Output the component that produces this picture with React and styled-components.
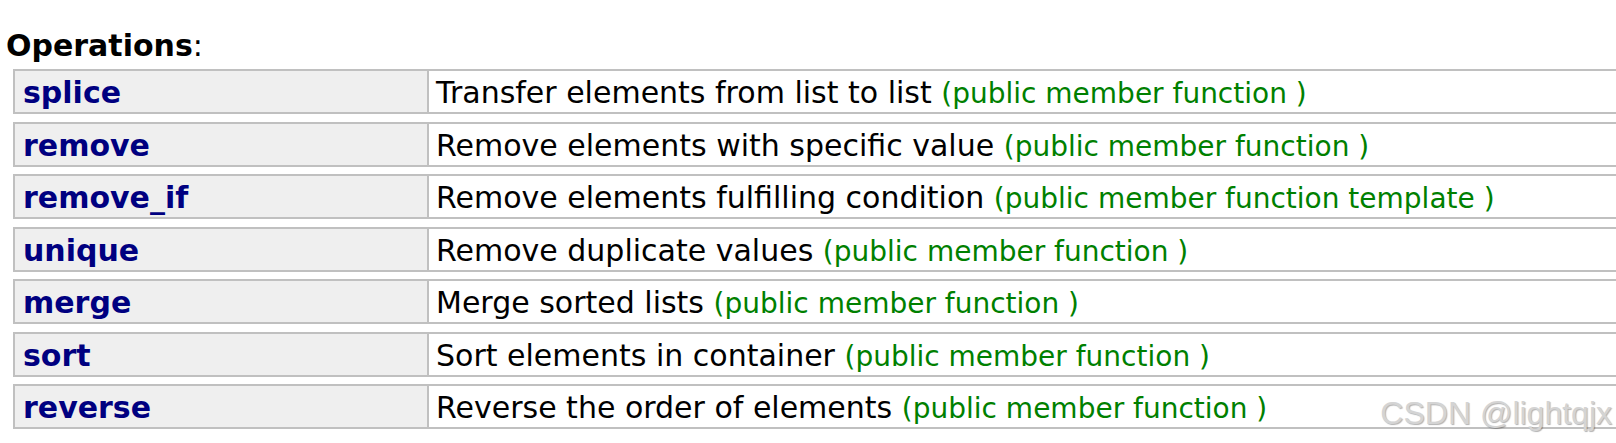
import styled, { createGlobalStyle } from "styled-components";

const GlobalStyle = createGlobalStyle`
html, body {
    margin: 0;
    padding: 0;
    background: #fff;
    overflow: hidden;
}
body {
    font-family: "DejaVu Sans", Verdana, sans-serif;
}
`

const operations = [
    { name: "splice", desc: "Transfer elements from list to list", kind: "public member function" },
    { name: "remove", desc: "Remove elements with specific value", kind: "public member function" },
    { name: "remove_if", desc: "Remove elements fulfilling condition", kind: "public member function template" },
    { name: "unique", desc: "Remove duplicate values", kind: "public member function" },
    { name: "merge", desc: "Merge sorted lists", kind: "public member function" },
    { name: "sort", desc: "Sort elements in container", kind: "public member function" },
    { name: "reverse", desc: "Reverse the order of elements", kind: "public member function" },
];

export default function App() {
    return (
        <>
            <GlobalStyle />
            <Page>
                <Heading><b>Operations</b>:</Heading>
                <List>
                    {operations.map((op) => (
                        <Row key={op.name}>
                            <NameCell>{op.name}</NameCell>
                            <DescCell>
                                {op.desc} <Kind>({op.kind} )</Kind>
                            </DescCell>
                        </Row>
                    ))}
                </List>
                <Watermark>CSDN @lightqjx</Watermark>
            </Page>
        </>
    )
}

const Page = styled.div`
position: relative;
width: 1616px;
height: 443px;
padding: 29px 0 0 6px;
box-sizing: border-box;
overflow: hidden;
`
const Heading = styled.div`
font-size: 30px;
line-height: 34px;
color: #000;
font-weight: 400;
b{
    font-weight: 700;
}
`
const List = styled.div`
display: flex;
flex-direction: column;
gap: 7.5px;
margin-top: 6px;
margin-left: 7px;
width: 1700px;
`
const Row = styled.div`
display: flex;
border: 2px solid #c0c0c0;
height: 41px;
`
const NameCell = styled.div`
flex-shrink: 0;
width: 414px;
box-sizing: border-box;
background: #efefef;
border-right: 2px solid #c0c0c0;
padding: 3px 0 0 8px;
font-size: 30px;
line-height: 38px;
font-weight: 700;
color: #000080;
`
const DescCell = styled.div`
flex: 1;
padding: 3px 0 0 7px;
font-size: 30px;
line-height: 38px;
color: #000;
white-space: nowrap;
`
const Kind = styled.span`
color: #008000;
font-size: 28px;
`
const Watermark = styled.div`
position: absolute;
right: 4px;
bottom: 11px;
font-family: "Liberation Sans", Arial, sans-serif;
font-size: 32px;
color: #d4d4d4;
text-shadow: 1px 1px 1px rgba(0, 0, 0, 0.3);
`
